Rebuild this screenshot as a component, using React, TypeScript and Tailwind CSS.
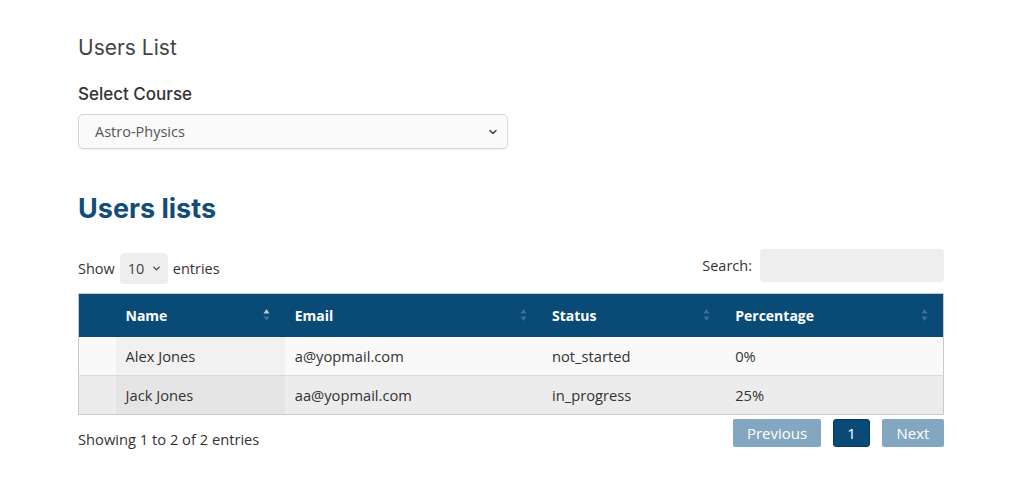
import { ChevronDown } from 'lucide-react';

const rows = [
  { name: "Alex Jones", email: "a@yopmail.com", status: "not_started", percentage: "0%" },
  { name: "Jack Jones", email: "aa@yopmail.com", status: "in_progress", percentage: "25%" },
];

function SortIcon({ active }: { active?: boolean }) {
  return (
    <svg width="7" height="14" viewBox="0 0 7 14" className="shrink-0">
      <path d="M3.5 1 L6.5 5.5 L0.5 5.5 Z" fill={active ? "#b8c9d8" : "#3f6f97"} />
      <path d="M3.5 13 L6.5 8.5 L0.5 8.5 Z" fill="#3f6f97" />
    </svg>
  );
}

function HeaderCell({ label, width, active }: { label: string; width: string; active?: boolean }) {
  return (
    <th className={`${width} h-[43px] pl-[10px] pr-[15px] text-left font-bold text-white`}>
      <div className="flex items-center justify-between">
        <span>{label}</span>
        <SortIcon active={active} />
      </div>
    </th>
  );
}

export default function App() {
  return (
    <div className="min-h-[498px] bg-white font-['Inter',sans-serif]">
      <div className="ml-[78px] w-[866px] pt-[34px]">
        <h1 className="text-[21px] leading-[28px] text-[#444]">Users List</h1>

        <label className="block mt-[20px] text-[17px] leading-[24px] font-medium text-[#333]">Select Course</label>
        <div className="relative mt-[8px] w-[430px] h-[35px] rounded-[5px] border border-[#d6d6d6] bg-[#fafafa] shadow-[0_1px_2px_rgba(0,0,0,0.06)] flex items-center pl-[16px]">
          <span className="text-[14.5px] text-[#555] font-['Open_Sans',sans-serif]">Astro-Physics</span>
          <ChevronDown className="absolute right-[8px] top-[11px] w-[12px] h-[12px] text-[#444]" strokeWidth={3} />
        </div>

        <h2 className="mt-[44px] text-[27px] leading-[32px] font-bold text-[#114d78]">Users lists</h2>

        <div className="mt-[24px] flex items-start justify-between font-['Open_Sans',sans-serif] text-[14.5px] text-[#333]">
          <div className="flex items-center gap-[5px] mt-[4px]">
            <span>Show</span>
            <div className="relative w-[48px] h-[31px] rounded-[4px] bg-[#eeeeee] flex items-center pl-[8px]">
              <span className="text-[#444]">10</span>
              <ChevronDown className="absolute right-[6px] top-[10px] w-[11px] h-[11px] text-[#444]" strokeWidth={3} />
            </div>
            <span>entries</span>
          </div>
          <div className="flex items-center gap-[8px]">
            <span>Search:</span>
            <div className="w-[184px] h-[33px] rounded-[4px] bg-[#eeeeee]" />
          </div>
        </div>

        <table className="mt-[9px] w-[866px] table-fixed border-collapse border border-[#c9c9c9] font-['Open_Sans',sans-serif] text-[14.7px]">
          <thead className="bg-[#0a4a77] text-[14px]">
            <tr>
              <th className="w-[37px]" />
              <HeaderCell label="Name" width="w-[169px]" active />
              <HeaderCell label="Email" width="w-[257px]" />
              <HeaderCell label="Status" width="w-[183px]" />
              <HeaderCell label="Percentage" width="w-[218px]" />
            </tr>
          </thead>
          <tbody className="text-[#333]">
            {rows.map((row, i) => (
              <tr key={row.email} className={i % 2 === 0 ? "bg-[#f9f9f9]" : "bg-[#ececec] border-t border-[#d9d9d9]"}>
                <td className="h-[39px]" />
                <td className={`pl-[10px] ${i % 2 === 0 ? "bg-[#f1f1f1]" : "bg-[#e5e5e5]"}`}>{row.name}</td>
                <td className="pl-[10px]">{row.email}</td>
                <td className="pl-[10px]">{row.status}</td>
                <td className="pl-[10px]">{row.percentage}</td>
              </tr>
            ))}
          </tbody>
        </table>

        <div className="mt-[4px] flex items-start justify-between font-['Open_Sans',sans-serif] text-[14.7px]">
          <span className="mt-[9px] text-[#333]">Showing 1 to 2 of 2 entries</span>
          <div className="flex items-center gap-[12px]">
            <div className="w-[88px] h-[28px] rounded-[2px] bg-[#84a7c1] flex items-center justify-center text-[15px] text-white">Previous</div>
            <div className="w-[37px] h-[28px] rounded-[3px] bg-[#0a4a77] border border-[#073a5e] flex items-center justify-center text-[15px] text-white">1</div>
            <div className="w-[62px] h-[28px] rounded-[2px] bg-[#84a7c1] flex items-center justify-center text-[15px] text-white">Next</div>
          </div>
        </div>
      </div>
    </div>
  );
}
